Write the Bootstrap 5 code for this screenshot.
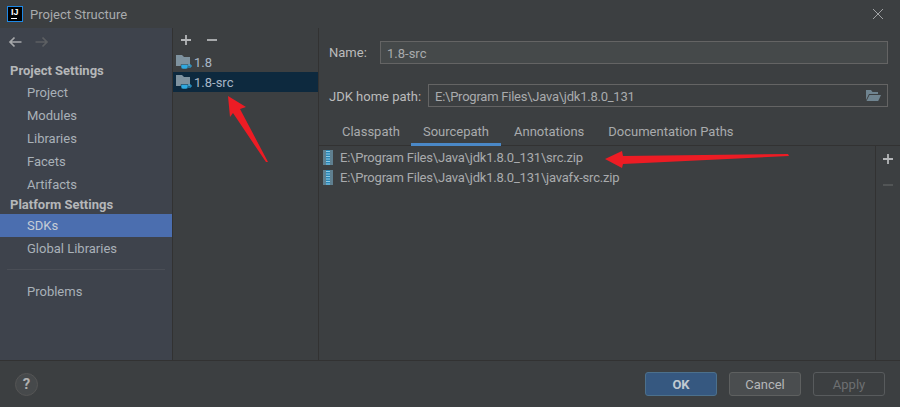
<!DOCTYPE html>
<html lang="en">
<head>
  <meta charset="UTF-8" />
  <title>Project Structure</title>
  <link href="https://cdn.jsdelivr.net/npm/bootstrap@5.3.0/dist/css/bootstrap.min.css" rel="stylesheet">
  <style>
    html, body { height: 100%; }
    body {
      background: #3c3f41;
      color: #bbbbbb;
      font-family: Roboto, "Noto Sans", "Liberation Sans", sans-serif;
      font-size: 13px;
      line-height: 18px;
      overflow: hidden;
    }
    .dialog { width: 900px; height: 407px; position: relative; }
    .titlebar { height: 28px; padding-left: 7px; gap: 7px; }
    .title-text { color: #a9abad; padding-top: 1px; }
    .logo {
      width: 16px; height: 16px; background: #000; border: 1px solid #1e88e5;
      color: #fff; font: 700 9px/9px "Liberation Sans", sans-serif;
      padding-left: 3px; padding-top: 1px;
    }
    .logo i { display: block; width: 6px; height: 1px; background: #fff; margin-top: 1px; }
    .main-area { height: 333px; border-bottom: 1px solid #323232; }
    .side-pane { width: 173px; background: #3e434c; border-right: 1px solid #323232; flex: none; }
    .nav-arrows { height: 31px; padding: 0 0 4px 8px; gap: 13px; }
    .side-head { height: 22px; line-height: 24px; padding-left: 10px; font-weight: 700; color: #b5b7b9; }
    .side-head.tight { height: 18px; line-height: 18px; }
    .side-item { height: 23px; line-height: 23px; padding-left: 27px; color: #a9b1b8; }
    .side-item.active-item { background: #4b6eaf; color: #c5ccd6; }
    .side-sep { height: 1px; background: #4a4e56; margin: 9px 7px 10px; }
    .tree-pane { width: 146px; border-right: 1px solid #323232; flex: none; }
    .tree-tools { height: 24px; padding-left: 7px; gap: 14px; }
    .tree-row { height: 20px; line-height: 20px; padding-left: 2px; gap: 2px; color: #a9b7c6; }
    .tree-row span { padding-top: 2px; }
    .tree-row.picked { background: #0d293e; }
    .detail-pane { min-width: 0; }
    .field-row { padding: 13px 12px 0 10px; gap: 10px; }
    .field-row + .field-row { padding-top: 20px; }
    .name-label { width: 41px; margin: 0; padding-top: 1px; }
    .jdk-label { width: 89px; margin: 0; padding-top: 2px; }
    .field-box {
      height: 23px; line-height: 21px; padding: 0 6px; color: #a9abad;
      border: 1px solid #646464; background: #3c3f41; border-radius: 0;
      font-size: 13px;
    }
    .field-box.filled { background: #45494a; padding-top: 1px; }
    .field-box:focus { background: #45494a; color: #a9abad; box-shadow: none; border-color: #646464; }
    .jdk-path { padding-top: 2px; letter-spacing: -.24px; }
    .tab-strip { margin-top: 12px; height: 27px; padding-left: 11px; border-bottom: 1px solid #323232; }
    .tab-item { padding: 0 12px; line-height: 26px; height: 27px; color: #a9abad; }
    .tab-item.first { padding-right: 11px; }
    .tab-item.on { border-bottom: 3px solid #4a88c7; margin-right: 1px; }
    .tab-item.docs { padding-left: 12px; }
    .path-list { padding-top: 1px; }
    .path-row { height: 20px; line-height: 20px; padding-left: 4px; gap: 7px; color: #a9abad; }
    .path-row span { padding-top: 2px; letter-spacing: -.2px; }
    .side-tools { width: 25px; border-left: 1px solid #323232; flex: none; padding-top: 7px; gap: 14px; }
    .footer-bar { height: 46px; padding: 0 15px; }
    .help-btn {
      width: 23px; height: 23px; border-radius: 50%; background: #46494b; border: 1px solid #555;
      color: #b0b0b0; font-weight: 700; font-size: 15px; line-height: 20px; text-align: center;
    }
    .dlg-btn {
      width: 72px; height: 24px; padding: 0; font-size: 13px; line-height: 21px; border-radius: 3px;
      border: 1px solid #5e6060; background: #4a4d4f; color: #b5b7b9;
    }
    .dlg-btn.ok { background: #365880; border-color: #4c708c; color: #c1c9d1; font-weight: 700; }
    .dlg-btn.off { background: transparent; border-color: #585b5d; color: #6d6f71; }
    .btn-wrap { gap: 12px; }
    .arrow-layer { position: absolute; left: 0; top: 0; pointer-events: none; }
  </style>
</head>
<body>
  <div class="dialog d-flex flex-column">

    <!-- title bar -->
    <div class="titlebar d-flex align-items-center">
      <div class="logo">IJ<i></i></div>
      <span class="title-text">Project Structure</span>
      <svg class="ms-auto me-3" width="12" height="12" viewBox="0 0 12 12"><path d="M1 1l10 10M11 1L1 11" stroke="#a0a2a4" fill="none"/></svg>
    </div>

    <div class="main-area d-flex">
      <!-- settings sidebar -->
      <div class="side-pane">
        <div class="nav-arrows d-flex align-items-center">
          <svg width="14" height="12" viewBox="0 0 14 12"><path d="M13.500 6H2M6.500 1.500L2 6l4.500 4.500" stroke="#a6a8aa" stroke-width="1.700" fill="none"/></svg>
          <svg width="14" height="12" viewBox="0 0 14 12"><path d="M0.500 6H12M7.500 1.500L12 6l-4.500 4.500" stroke="#5c5f62" stroke-width="1.700" fill="none"/></svg>
        </div>
        <div class="side-head">Project Settings</div>
        <div class="side-item">Project</div>
        <div class="side-item">Modules</div>
        <div class="side-item">Libraries</div>
        <div class="side-item">Facets</div>
        <div class="side-item">Artifacts</div>
        <div class="side-head tight">Platform Settings</div>
        <div class="side-item active-item">SDKs</div>
        <div class="side-item">Global Libraries</div>
        <div class="side-sep"></div>
        <div class="side-item">Problems</div>
      </div>

      <!-- sdk tree -->
      <div class="tree-pane">
        <div class="tree-tools d-flex align-items-center">
          <svg width="12" height="12" viewBox="0 0 12 12"><path d="M6 1v10M1 6h10" stroke="#b4b6b8" stroke-width="1.800"/></svg>
          <svg width="12" height="12" viewBox="0 0 12 12"><path d="M1 6h10" stroke="#b4b6b8" stroke-width="1.800"/></svg>
        </div>
        <div class="tree-row d-flex align-items-center">
          <svg width="17" height="16" viewBox="0 0 17 16"><path d="M1 1h6l2 2h6v9H1z" fill="#7e929f"/><path d="M6 10.500h7v2.500q0 2-2 2H8q-2 0-2-2z" fill="#2fa9e0" stroke="#3c3f41" stroke-width=".5"/><path d="M13 11h3v2h-3" fill="none" stroke="#2fa9e0"/></svg>
          <span>1.8</span>
        </div>
        <div class="tree-row picked d-flex align-items-center">
          <svg width="17" height="16" viewBox="0 0 17 16"><path d="M1 1h6l2 2h6v9H1z" fill="#7e929f"/><path d="M6 10.500h7v2.500q0 2-2 2H8q-2 0-2-2z" fill="#2fa9e0" stroke="#0d293e" stroke-width=".5"/><path d="M13 11h3v2h-3" fill="none" stroke="#2fa9e0"/></svg>
          <span>1.8-src</span>
        </div>
      </div>

      <!-- sdk details -->
      <div class="detail-pane flex-grow-1 d-flex flex-column">
        <div class="field-row d-flex align-items-center">
          <label class="name-label flex-shrink-0">Name:</label>
          <input class="form-control field-box filled flex-grow-1" value="1.8-src">
        </div>
        <div class="field-row d-flex align-items-center">
          <label class="jdk-label flex-shrink-0 text-nowrap">JDK home path:</label>
          <div class="field-box flex-grow-1 d-flex align-items-center justify-content-between">
            <span class="jdk-path">E:\Program Files\Java\jdk1.8.0_131</span>
            <svg width="16" height="13" viewBox="0 0 16 13"><path d="M1 1h5l1.500 2H13v2H4L1 11z" fill="#6f8490"/><path d="M4.500 6H16l-2.800 6H1.500z" fill="#6f8490"/></svg>
          </div>
        </div>
        <div class="tab-strip d-flex">
          <div class="tab-item first">Classpath</div>
          <div class="tab-item on">Sourcepath</div>
          <div class="tab-item">Annotations</div>
          <div class="tab-item docs">Documentation Paths</div>
        </div>
        <div class="d-flex flex-grow-1">
          <div class="path-list flex-grow-1">
            <div class="path-row d-flex align-items-center">
              <svg width="10" height="15" viewBox="0 0 10 15"><rect width="10" height="15" fill="#5f7f8f"/><rect x="3" width="4" height="15" fill="#2a86b5"/><path d="M3 1.500h4M3 4h4M3 6.500h4M3 9h4M3 11.500h4M3 14h4" stroke="#8fcbe6"/></svg>
              <span>E:\Program Files\Java\jdk1.8.0_131\src.zip</span>
            </div>
            <div class="path-row d-flex align-items-center">
              <svg width="10" height="15" viewBox="0 0 10 15"><rect width="10" height="15" fill="#5f7f8f"/><rect x="3" width="4" height="15" fill="#2a86b5"/><path d="M3 1.500h4M3 4h4M3 6.500h4M3 9h4M3 11.500h4M3 14h4" stroke="#8fcbe6"/></svg>
              <span>E:\Program Files\Java\jdk1.8.0_131\javafx-src.zip</span>
            </div>
          </div>
          <div class="side-tools d-flex flex-column align-items-center">
            <svg width="12" height="12" viewBox="0 0 12 12"><path d="M6 1v10M1 6h10" stroke="#b4b6b8" stroke-width="1.800"/></svg>
            <svg width="12" height="12" viewBox="0 0 12 12"><path d="M1 6h10" stroke="#55585a" stroke-width="1.800"/></svg>
          </div>
        </div>
      </div>
    </div>

    <!-- footer -->
    <div class="footer-bar d-flex align-items-center justify-content-between">
      <div class="help-btn">?</div>
      <div class="btn-wrap d-flex">
        <button class="btn dlg-btn ok">OK</button>
        <button class="btn dlg-btn">Cancel</button>
        <button class="btn dlg-btn off">Apply</button>
      </div>
    </div>

    <!-- red annotation arrows drawn over the window -->
    <svg class="arrow-layer" width="900" height="407" viewBox="0 0 900 407">
      <path d="M228 96L246 107 240 109 268 162 266 162 233 113 230 117z" fill="#ed1c24"/>
      <path d="M605 159L622 151 623 156 788 154 789 156 623 164 622 168z" fill="#ed1c24"/>
    </svg>
  </div>

  <script src="https://cdn.jsdelivr.net/npm/bootstrap@5.3.0/dist/js/bootstrap.bundle.min.js"></script>
</body>
</html>
